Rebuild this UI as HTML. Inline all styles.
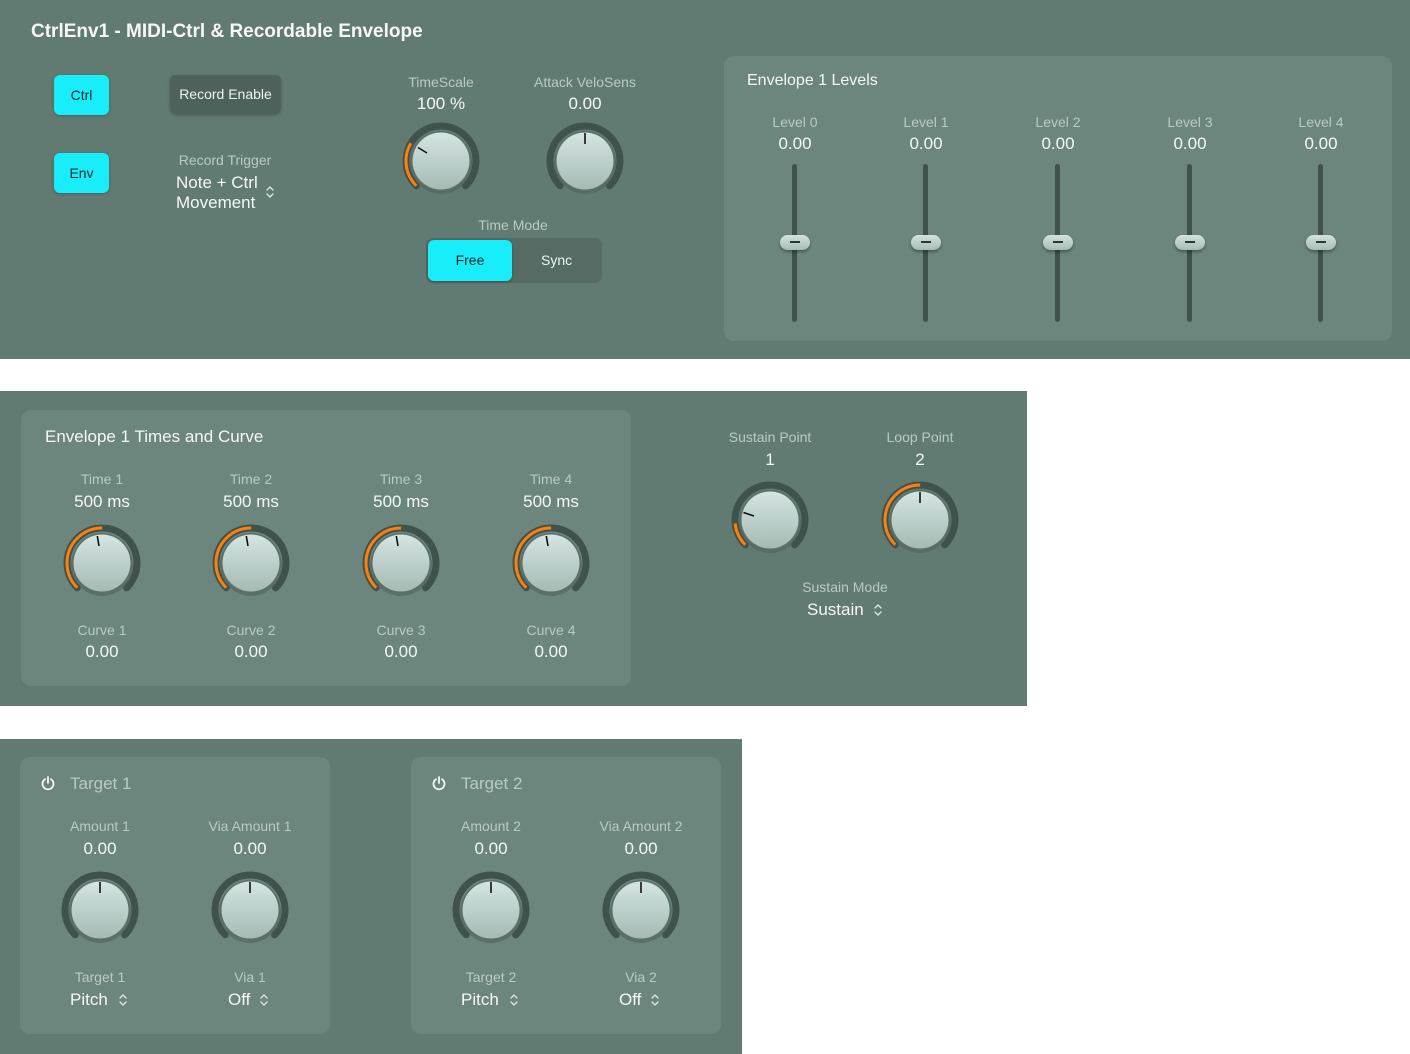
<!DOCTYPE html>
<html><head><meta charset="utf-8"><style>
*{margin:0;padding:0;box-sizing:border-box}
body{width:1410px;height:1054px;background:#fff;position:relative;overflow:hidden;font-family:"Liberation Sans",sans-serif}
.p{position:absolute;background:#627b72}
.b{position:absolute;background:#6c867e;border-radius:10px}
.t{position:absolute;white-space:nowrap}
.c{position:absolute;width:200px;text-align:center;white-space:nowrap}
.l{font-size:14px;color:#b9cac4}
.v{font-size:17px;color:#f4f8f7}
.h{font-size:16px;color:#f4f8f7}
.k{position:absolute;width:80px;height:80px}
.btn{position:absolute;border-radius:6px;font-size:14px;text-align:center}
.cy{background:#19edf9;color:#0c2a2c;box-shadow:0 1px 3px rgba(0,0,0,.25)}
.tr{position:absolute;width:5px;background:#3f524c;border-radius:3px}
.th{position:absolute;width:30px;height:15px;border-radius:8px;background:linear-gradient(#d3e2de,#a8bcb6);box-shadow:0 2px 3px rgba(0,0,0,.35)}
.th:after{content:"";position:absolute;left:10px;top:6px;width:10px;height:2px;background:#2a3733}
.ch{position:absolute;width:10px;height:14px}
</style></head><body>
<svg width="0" height="0" style="position:absolute">
<defs>
<linearGradient id="g" x1="0" y1="0" x2="0" y2="1"><stop offset="0" stop-color="#d5e5e1"/><stop offset="1" stop-color="#a6bab4"/></linearGradient>
<symbol id="kb" viewBox="0 0 80 80">
<circle cx="40" cy="40" r="35" fill="none" stroke="#3f524c" stroke-width="7" stroke-dasharray="164.9 300" stroke-linecap="round" transform="rotate(135 40 40)"/>
<circle cx="40" cy="42" r="31" fill="#4f635c" opacity=".6"/>
<circle cx="40" cy="40" r="30" fill="#5a6f68"/>
<circle cx="40" cy="40" r="28.5" fill="url(#g)"/>
</symbol>
<symbol id="chv" viewBox="0 0 10 14"><path d="M2 5L5 2L8 5M2 9L5 12L8 9" fill="none" stroke="#dfe8e5" stroke-width="1.3" stroke-linecap="round" stroke-linejoin="round"/></symbol>
</defs></svg>

<!-- Panel 1 -->
<div class="p" style="left:0;top:0;width:1410px;height:359px"></div>
<div class="t" style="left:31px;top:21px;font-size:19px;font-weight:bold;color:#f4f8f7">CtrlEnv1 - MIDI-Ctrl &amp; Recordable Envelope</div>
<div class="btn cy" style="left:54px;top:75px;width:55px;height:40px;line-height:40px">Ctrl</div>
<div class="btn cy" style="left:54px;top:153px;width:55px;height:40px;line-height:40px">Env</div>
<div class="btn" style="left:170px;top:75px;width:111px;height:39px;line-height:39px;background:#4e625b;color:#eef3f1;box-shadow:0 1px 3px rgba(0,0,0,.25)">Record Enable</div>
<div class="c l" style="left:125px;top:152px">Record Trigger</div>
<div class="t v" style="left:176px;top:173px;line-height:20px">Note + Ctrl<br>Movement</div>
<svg class="ch" style="left:265px;top:185px"><use href="#chv"/></svg>

<div class="c l" style="left:341px;top:74px">TimeScale</div>
<div class="c v" style="left:341px;top:94px">100 %</div>
<svg class="k" style="left:401px;top:121px" viewBox="0 0 80 80"><use href="#kb"/><circle cx="40" cy="40" r="35" fill="none" stroke="#ff7f0a" stroke-width="3" stroke-dasharray="46 300" transform="rotate(135 40 40)"/><line x1="26" y1="32" x2="17" y2="26.5" stroke="#111" stroke-width="1.6"/></svg>
<div class="c l" style="left:485px;top:74px">Attack VeloSens</div>
<div class="c v" style="left:485px;top:94px">0.00</div>
<svg class="k" style="left:545px;top:121px" viewBox="0 0 80 80"><use href="#kb"/><line x1="40" y1="23" x2="40" y2="12" stroke="#111" stroke-width="1.6"/></svg>

<div class="c l" style="left:413px;top:217px">Time Mode</div>
<div style="position:absolute;left:426px;top:238px;width:176px;height:45px;border-radius:7px;background:#566b64"></div>
<div class="btn cy" style="left:428px;top:240px;width:84px;height:41px;line-height:41px">Free</div>
<div class="t" style="left:541px;top:252px;font-size:14px;color:#eef3f1">Sync</div>

<div class="b" style="left:724px;top:56px;width:668px;height:285px"></div>
<div class="t h" style="left:747px;top:72px">Envelope 1 Levels</div>
<div class="c l" style="left:695px;top:114px">Level 0</div><div class="c v" style="left:695px;top:134px">0.00</div>
<div class="c l" style="left:826px;top:114px">Level 1</div><div class="c v" style="left:826px;top:134px">0.00</div>
<div class="c l" style="left:958px;top:114px">Level 2</div><div class="c v" style="left:958px;top:134px">0.00</div>
<div class="c l" style="left:1090px;top:114px">Level 3</div><div class="c v" style="left:1090px;top:134px">0.00</div>
<div class="c l" style="left:1221px;top:114px">Level 4</div><div class="c v" style="left:1221px;top:134px">0.00</div>
<div class="tr" style="left:792px;top:164px;height:158px"></div><div class="th" style="left:780px;top:235px"></div>
<div class="tr" style="left:923px;top:164px;height:158px"></div><div class="th" style="left:911px;top:235px"></div>
<div class="tr" style="left:1055px;top:164px;height:158px"></div><div class="th" style="left:1043px;top:235px"></div>
<div class="tr" style="left:1187px;top:164px;height:158px"></div><div class="th" style="left:1175px;top:235px"></div>
<div class="tr" style="left:1318px;top:164px;height:158px"></div><div class="th" style="left:1306px;top:235px"></div>

<!-- Panel 2 -->
<div class="p" style="left:0;top:391px;width:1027px;height:315px"></div>
<div class="b" style="left:21px;top:410px;width:610px;height:276px"></div>
<div class="t h" style="left:45px;top:427px;font-size:17px">Envelope 1 Times and Curve</div>

<div class="c l" style="left:2px;top:471px">Time 1</div><div class="c v" style="left:2px;top:492px">500 ms</div>
<div class="c l" style="left:151px;top:471px">Time 2</div><div class="c v" style="left:151px;top:492px">500 ms</div>
<div class="c l" style="left:301px;top:471px">Time 3</div><div class="c v" style="left:301px;top:492px">500 ms</div>
<div class="c l" style="left:451px;top:471px">Time 4</div><div class="c v" style="left:451px;top:492px">500 ms</div>
<svg class="k" style="left:62px;top:523px" viewBox="0 0 80 80"><use href="#kb"/><circle cx="40" cy="40" r="35" fill="none" stroke="#ff7f0a" stroke-width="3" stroke-dasharray="82.5 300" transform="rotate(135 40 40)"/><line x1="37" y1="23" x2="35.3" y2="13" stroke="#111" stroke-width="1.6"/></svg>
<svg class="k" style="left:211px;top:523px" viewBox="0 0 80 80"><use href="#kb"/><circle cx="40" cy="40" r="35" fill="none" stroke="#ff7f0a" stroke-width="3" stroke-dasharray="82.5 300" transform="rotate(135 40 40)"/><line x1="37" y1="23" x2="35.3" y2="13" stroke="#111" stroke-width="1.6"/></svg>
<svg class="k" style="left:361px;top:523px" viewBox="0 0 80 80"><use href="#kb"/><circle cx="40" cy="40" r="35" fill="none" stroke="#ff7f0a" stroke-width="3" stroke-dasharray="82.5 300" transform="rotate(135 40 40)"/><line x1="37" y1="23" x2="35.3" y2="13" stroke="#111" stroke-width="1.6"/></svg>
<svg class="k" style="left:511px;top:523px" viewBox="0 0 80 80"><use href="#kb"/><circle cx="40" cy="40" r="35" fill="none" stroke="#ff7f0a" stroke-width="3" stroke-dasharray="82.5 300" transform="rotate(135 40 40)"/><line x1="37" y1="23" x2="35.3" y2="13" stroke="#111" stroke-width="1.6"/></svg>
<div class="c l" style="left:2px;top:622px">Curve 1</div><div class="c v" style="left:2px;top:642px">0.00</div>
<div class="c l" style="left:151px;top:622px">Curve 2</div><div class="c v" style="left:151px;top:642px">0.00</div>
<div class="c l" style="left:301px;top:622px">Curve 3</div><div class="c v" style="left:301px;top:642px">0.00</div>
<div class="c l" style="left:451px;top:622px">Curve 4</div><div class="c v" style="left:451px;top:642px">0.00</div>

<div class="c l" style="left:670px;top:429px">Sustain Point</div><div class="c v" style="left:670px;top:450px">1</div>
<div class="c l" style="left:820px;top:429px">Loop Point</div><div class="c v" style="left:820px;top:450px">2</div>
<svg class="k" style="left:730px;top:480px" viewBox="0 0 80 80"><use href="#kb"/><circle cx="40" cy="40" r="35" fill="none" stroke="#ff7f0a" stroke-width="3" stroke-dasharray="24 300" transform="rotate(135 40 40)"/><line x1="24" y1="36" x2="13.5" y2="32.5" stroke="#111" stroke-width="1.6"/></svg>
<svg class="k" style="left:880px;top:480px" viewBox="0 0 80 80"><use href="#kb"/><circle cx="40" cy="40" r="35" fill="none" stroke="#ff7f0a" stroke-width="3" stroke-dasharray="82.5 300" transform="rotate(135 40 40)"/><line x1="40" y1="23" x2="40" y2="12" stroke="#111" stroke-width="1.6"/></svg>
<div class="c l" style="left:745px;top:579px">Sustain Mode</div>
<div class="t v" style="left:807px;top:600px">Sustain</div><svg class="ch" style="left:873px;top:603px"><use href="#chv"/></svg>

<!-- Panel 3 -->
<div class="p" style="left:0;top:739px;width:742px;height:315px"></div>
<div class="b" style="left:20px;top:757px;width:310px;height:277px"></div>
<div class="b" style="left:411px;top:757px;width:310px;height:277px"></div>
<svg style="position:absolute;left:40px;top:775px" width="16" height="16" viewBox="0 0 16 16"><path d="M5 4.2A5.5 5.5 0 1 0 11 4.2M8 2v6" fill="none" stroke="#f4f8f7" stroke-width="1.8" stroke-linecap="round"/></svg>
<div class="t" style="left:70px;top:774px;font-size:17px;color:#b9cac4">Target 1</div>
<svg style="position:absolute;left:431px;top:775px" width="16" height="16" viewBox="0 0 16 16"><path d="M5 4.2A5.5 5.5 0 1 0 11 4.2M8 2v6" fill="none" stroke="#f4f8f7" stroke-width="1.8" stroke-linecap="round"/></svg>
<div class="t" style="left:461px;top:774px;font-size:17px;color:#b9cac4">Target 2</div>

<div class="c l" style="left:0px;top:818px">Amount 1</div><div class="c v" style="left:0px;top:839px">0.00</div>
<div class="c l" style="left:150px;top:818px">Via Amount 1</div><div class="c v" style="left:150px;top:839px">0.00</div>
<div class="c l" style="left:391px;top:818px">Amount 2</div><div class="c v" style="left:391px;top:839px">0.00</div>
<div class="c l" style="left:541px;top:818px">Via Amount 2</div><div class="c v" style="left:541px;top:839px">0.00</div>
<svg class="k" style="left:60px;top:870px" viewBox="0 0 80 80"><use href="#kb"/><line x1="40" y1="23" x2="40" y2="12" stroke="#111" stroke-width="1.6"/></svg>
<svg class="k" style="left:210px;top:870px" viewBox="0 0 80 80"><use href="#kb"/><line x1="40" y1="23" x2="40" y2="12" stroke="#111" stroke-width="1.6"/></svg>
<svg class="k" style="left:451px;top:870px" viewBox="0 0 80 80"><use href="#kb"/><line x1="40" y1="23" x2="40" y2="12" stroke="#111" stroke-width="1.6"/></svg>
<svg class="k" style="left:601px;top:870px" viewBox="0 0 80 80"><use href="#kb"/><line x1="40" y1="23" x2="40" y2="12" stroke="#111" stroke-width="1.6"/></svg>
<div class="c l" style="left:0px;top:969px">Target 1</div>
<div class="c l" style="left:150px;top:969px">Via 1</div>
<div class="c l" style="left:391px;top:969px">Target 2</div>
<div class="c l" style="left:541px;top:969px">Via 2</div>
<div class="t v" style="left:70px;top:990px">Pitch</div><svg class="ch" style="left:118px;top:993px"><use href="#chv"/></svg>
<div class="t v" style="left:228px;top:990px">Off</div><svg class="ch" style="left:259px;top:993px"><use href="#chv"/></svg>
<div class="t v" style="left:461px;top:990px">Pitch</div><svg class="ch" style="left:509px;top:993px"><use href="#chv"/></svg>
<div class="t v" style="left:619px;top:990px">Off</div><svg class="ch" style="left:650px;top:993px"><use href="#chv"/></svg>
</body></html>
